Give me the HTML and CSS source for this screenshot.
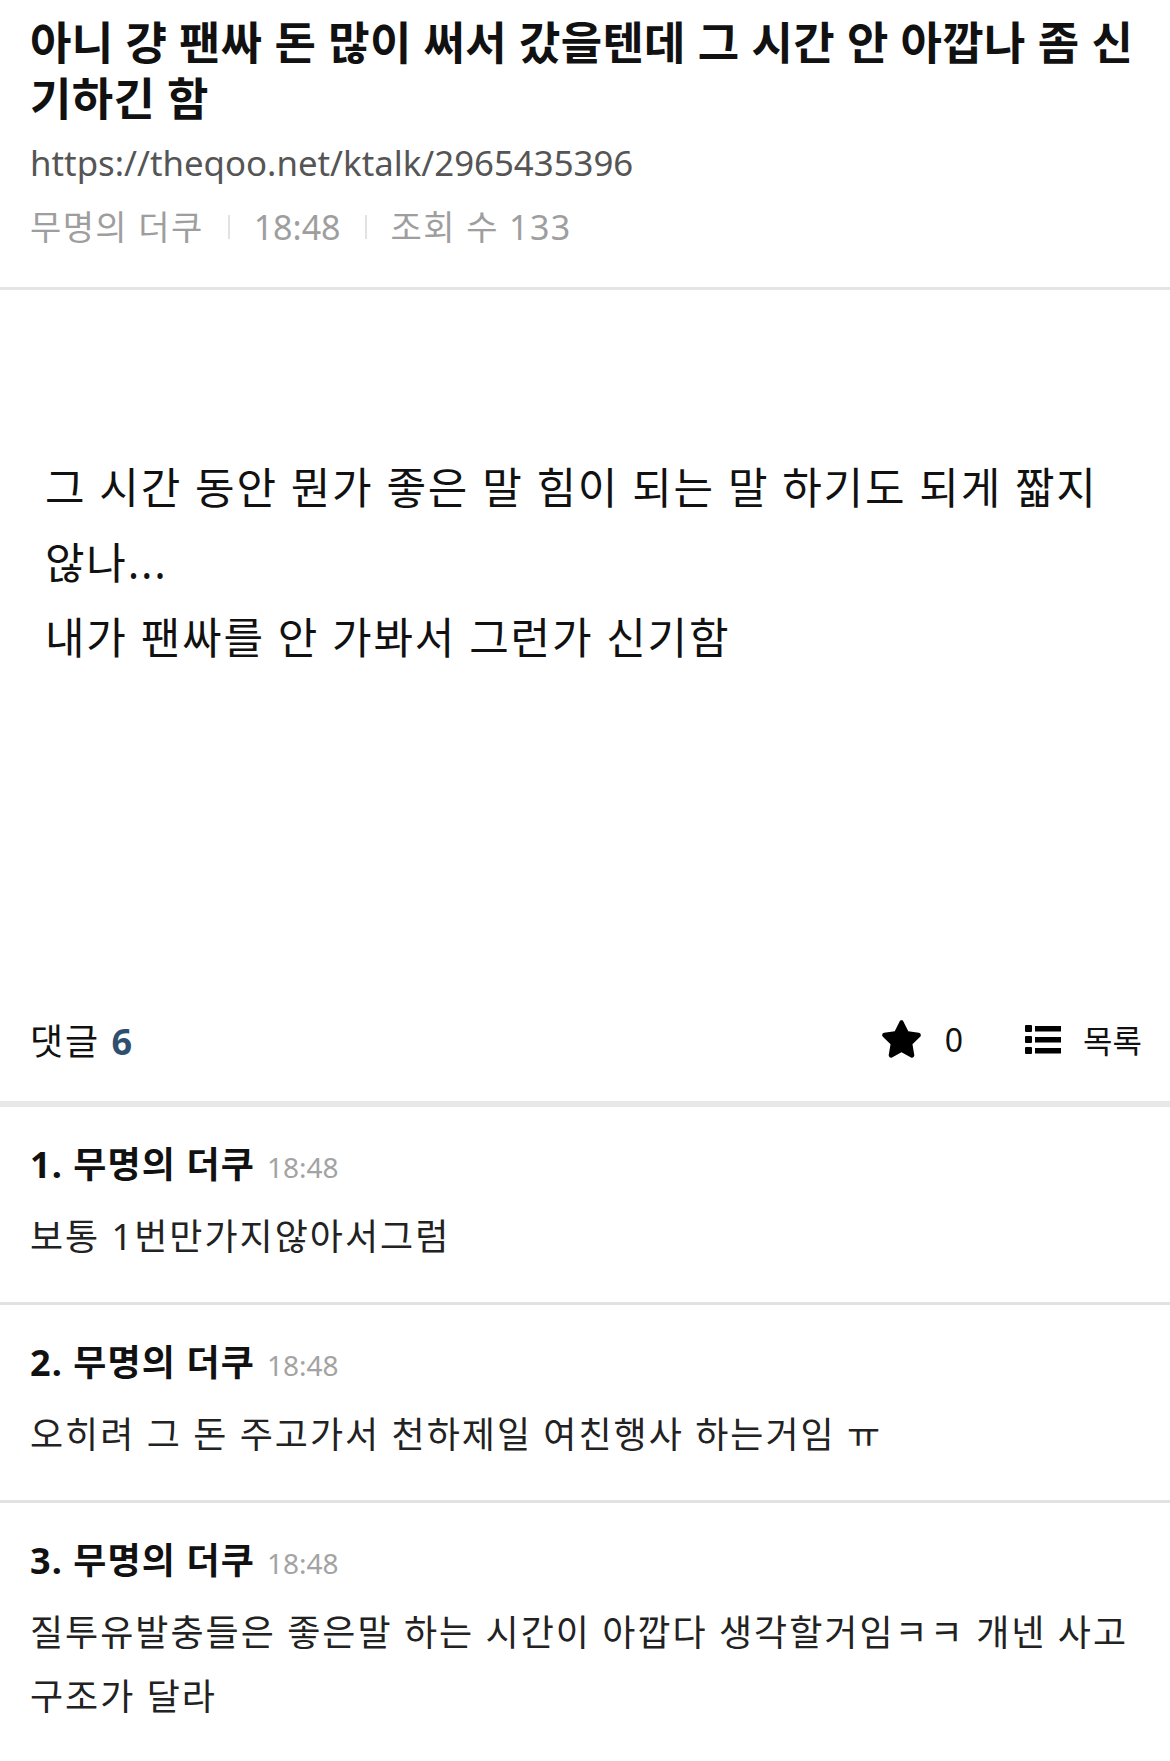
FILE: index.html
```html
<!DOCTYPE html>
<html lang="ko">
<head>
<meta charset="utf-8">
<title>theqoo</title>
<link rel="stylesheet" href="styles.css">
</head>
<body>
<div class="page">
  <header class="post-head">
    <h1 class="title">아니 걍 팬싸 돈 많이 써서 갔을텐데 그 시간 안 아깝나 좀 신기하긴 함</h1>
    <div class="url">https://theqoo.net/ktalk/2965435396</div>
    <div class="meta">
      <span class="ko">무명의 더쿠</span><span class="sep"></span><span>18:48</span><span class="sep"></span><span class="ko">조회 수 133</span>
    </div>
  </header>

  <article class="post-body">
    <p>그 시간 동안 뭔가 좋은 말 힘이 되는 말 하기도 되게 짧지 않나...<br>내가 팬싸를 안 가봐서 그런가 신기함</p>
  </article>

  <div class="comment-bar">
    <div class="count">댓글 <b>6</b></div>
    <div class="actions">
      <span class="action star-action">
        <svg class="star" viewBox="1.6 1.6 20.8 20.8" width="39" height="38" aria-hidden="true"><path d="M12 1.8c.5 0 .9.3 1.1.7l2.6 5.3 5.8.8c.5.1.9.4 1 .9.2.5 0 1-.3 1.3l-4.2 4.1 1 5.8c.1.5-.1 1-.5 1.3-.4.3-.9.3-1.3.1L12 19.3l-5.2 2.8c-.4.2-.9.2-1.3-.1-.4-.3-.6-.8-.5-1.3l1-5.8-4.2-4.1c-.4-.3-.5-.8-.3-1.3.1-.5.5-.8 1-.9l5.8-.8 2.6-5.3c.2-.4.6-.7 1.100-.7z"/></svg>
        <span>0</span>
      </span>
      <span class="action">
        <svg class="list" viewBox="0 0 36 30" width="36" height="30" aria-hidden="true"><rect x="0" y="1" width="7" height="7" rx="1"/><rect x="10" y="2" width="26" height="5.5"/><rect x="0" y="12" width="7" height="7" rx="1"/><rect x="10" y="13" width="26" height="5.5"/><rect x="0" y="23" width="7" height="7" rx="1"/><rect x="10" y="24" width="26" height="5.5"/></svg>
        <span class="ko">목록</span>
      </span>
    </div>
  </div>

  <ul class="comments">
    <li class="comment">
      <div class="c-head"><strong>1. 무명의 더쿠</strong><span class="time">18:48</span></div>
      <div class="c-text">보통 1번만가지않아서그럼</div>
    </li>
    <li class="comment">
      <div class="c-head"><strong>2. 무명의 더쿠</strong><span class="time">18:48</span></div>
      <div class="c-text">오히려 그 돈 주고가서 천하제일 여친행사 하는거임 ㅠ</div>
    </li>
    <li class="comment">
      <div class="c-head"><strong>3. 무명의 더쿠</strong><span class="time">18:48</span></div>
      <div class="c-text">질투유발충들은 좋은말 하는 시간이 아깝다 생각할거임ㅋㅋ 개넨 사고 구조가 달라</div>
    </li>
  </ul>
</div>
</body>
</html>
```
FILE: styles.css
```css
* { box-sizing: border-box; }
html, body { margin: 0; padding: 0; background: #fff; }
body {
  font-family: "Noto Sans", "Noto Sans CJK KR", sans-serif;
  color: #111;
}
.page { width: 1170px; }

.post-head {
  padding: 15px 20px 0 30px;
  border-bottom: 3px solid #e4e4e4;
  height: 290px;
}
.title {
  margin: 0;
  font-size: 45px;
  line-height: 56px;
  font-weight: 700;
  letter-spacing: 0.3px;
  color: #111;
}
.url {
  margin-top: 11px;
  font-size: 34.8px;
  line-height: 50px;
  color: #555;
}
.meta {
  margin-top: 15px;
  display: flex;
  align-items: center;
  font-size: 34px;
  line-height: 48px;
  color: #9e9e9e;
}
.meta .ko { letter-spacing: 1.4px; }
.sep {
  display: inline-block;
  width: 2px;
  height: 24px;
  background: #e2e2e2;
  margin: 0 24px;
}

.post-body {
  padding: 160px 45px 0;
  height: 687px;
}
.post-body p {
  margin: 0;
  font-size: 43px;
  line-height: 75px;
  letter-spacing: 1.8px;
  color: #111;
}

.comment-bar {
  height: 124px;
  padding: 0 28px 0 30px;
  display: flex;
  align-items: center;
  justify-content: space-between;
  border-bottom: 6px solid #e8e8e8;
  box-sizing: content-box;
}
.count {
  font-size: 36px;
  letter-spacing: 2px;
  color: #111;
}
.count b {
  color: #2f4f6f;
  font-weight: 700;
  letter-spacing: 0;
}
.actions {
  display: flex;
  align-items: center;
  gap: 62px;
  font-size: 32px;
  color: #111;
}
.action {
  display: flex;
  align-items: center;
  gap: 22px;
}
.star-action { gap: 24px; }
.star { fill: #000; }
.list { fill: #000; }

.comments {
  list-style: none;
  margin: 0;
  padding: 0;
}
.comment {
  padding: 40px 30px 33px;
  border-bottom: 3px solid #e2e2e2;
}
.comment:last-child { border-bottom: none; }
.c-head {
  display: flex;
  align-items: baseline;
  gap: 12px;
  line-height: 36px;
}
.c-head strong {
  font-size: 36px;
  font-weight: 700;
  letter-spacing: 1.1px;
  color: #111;
}
.time {
  font-size: 28px;
  color: #a3a3a3;
}
.c-text {
  margin-top: 20px;
  font-size: 36px;
  line-height: 64px;
  letter-spacing: 2px;
  color: #222;
}
```
